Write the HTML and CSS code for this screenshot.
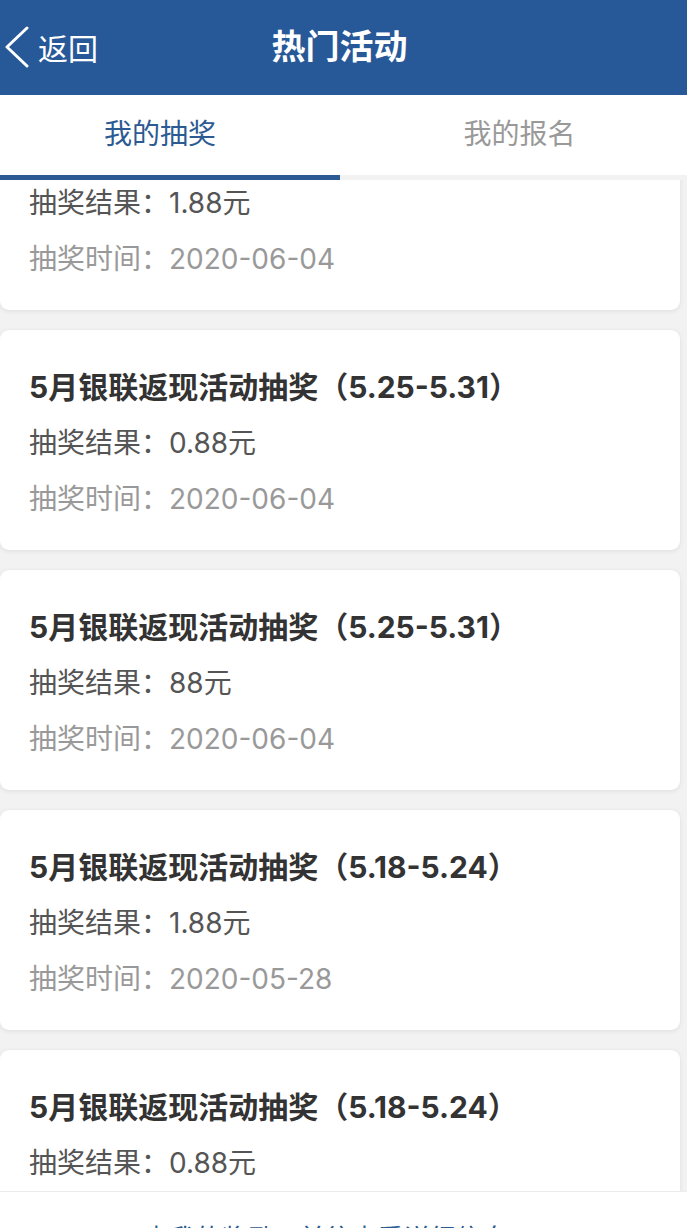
FILE: index.html
```html
<!DOCTYPE html>
<html lang="zh-CN">

<head>
    <meta charset="UTF-8">
    <meta name="viewport" content="width=device-width, initial-scale=1.0">
    <title>热门活动</title>
    <link rel="stylesheet" href="styles.css">
</head>

<body>
    <div class="page">
        <header class="topbar">
            <a class="back" href="#">
                <svg class="back-icon" width="26" height="42" viewBox="0 0 26 42">
                    <polyline points="23,2 3,21 23,40" fill="none" stroke="#fff" stroke-width="3" stroke-linecap="round" stroke-linejoin="round" />
                </svg>
                <span>返回</span>
            </a>
            <h1>热门活动</h1>
        </header>

        <nav class="tabs">
            <div class="tab active"><span>我的抽奖</span></div>
            <div class="tab"><span>我的报名</span></div>
        </nav>

        <div class="list">
            <div class="list-inner">
                <div class="card">
                    <div class="card-title">5月银联返现活动抽奖（5.25-5.31）</div>
                    <div class="card-result">抽奖结果：1.88元</div>
                    <div class="card-time">抽奖时间：2020-06-04</div>
                </div>
                <div class="card">
                    <div class="card-title">5月银联返现活动抽奖（5.25-5.31）</div>
                    <div class="card-result">抽奖结果：0.88元</div>
                    <div class="card-time">抽奖时间：2020-06-04</div>
                </div>
                <div class="card">
                    <div class="card-title">5月银联返现活动抽奖（5.25-5.31）</div>
                    <div class="card-result">抽奖结果：88元</div>
                    <div class="card-time">抽奖时间：2020-06-04</div>
                </div>
                <div class="card">
                    <div class="card-title">5月银联返现活动抽奖（5.18-5.24）</div>
                    <div class="card-result">抽奖结果：1.88元</div>
                    <div class="card-time">抽奖时间：2020-05-28</div>
                </div>
                <div class="card">
                    <div class="card-title">5月银联返现活动抽奖（5.18-5.24）</div>
                    <div class="card-result">抽奖结果：0.88元</div>
                    <div class="card-time">抽奖时间：2020-05-28</div>
                </div>
            </div>
        </div>

        <footer class="footer">
            <a href="#">点我的奖励，前往查看详细信息</a>
        </footer>
    </div>
</body>

</html>
```

FILE: styles.css
```css
body {
    margin: 0;
    padding: 0;
    font-family: "Inter", "Noto Sans CJK SC", sans-serif;
    background-color: #f2f2f2;
    overflow: hidden;
}

.page {
    height: 1228px;
    display: flex;
    flex-direction: column;
    overflow: hidden;
}

/* Top bar */
.topbar {
    height: 95px;
    flex-shrink: 0;
    background-color: #275898;
    display: grid;
    grid-template-columns: 1fr auto 1fr;
    align-items: center;
}

.back {
    display: flex;
    align-items: center;
    gap: 8px;
    padding-left: 4px;
    color: #fff;
    text-decoration: none;
    font-size: 30px;
    margin-top: -2px;
}

.back-icon {
    display: block;
}

.topbar h1 {
    margin: 0 0 6px -8px;
    color: #fff;
    font-size: 34px;
    font-weight: 700;
    text-align: center;
}

/* Tabs */
.tabs {
    height: 85px;
    flex-shrink: 0;
    display: grid;
    grid-template-columns: 340px 1fr;
    background-color: #fff;
}

.tab {
    display: flex;
    align-items: center;
    justify-content: center;
    font-size: 28px;
    color: #999;
    border-bottom: 5px solid #f2f2f2;
}

.tab span {
    margin-bottom: 6px;
}

.tab.active {
    color: #2c5a92;
    border-bottom-color: #2c5a92;
    padding-right: 20px;
}

.tab:not(.active) {
    padding-left: 12px;
}

/* List */
.list {
    height: 1011px;
    flex-shrink: 0;
    overflow: hidden;
}

.list-inner {
    margin-top: -90px;
    padding-right: 7px;
}

.card {
    height: 220px;
    box-sizing: border-box;
    margin-bottom: 20px;
    padding: 37px 29px 0;
    background-color: #fff;
    border-radius: 9px;
    box-shadow: 0 1px 5px rgba(0, 0, 0, 0.09);
}

.card-title,
.card-result,
.card-time {
    line-height: 40px;
    white-space: nowrap;
}

.card-title {
    font-size: 30px;
    font-weight: 700;
    color: #333;
}

.card-result {
    margin-top: 16px;
    font-size: 28px;
    color: #555;
}

.card-time {
    margin-top: 16px;
    font-size: 28px;
    color: #999;
}

/* Footer */
.footer {
    flex-shrink: 0;
    height: 100px;
    box-sizing: border-box;
    padding: 29px 36px 0 0;
    text-align: center;
    background-color: #fff;
    border-top: 1px solid #ececec;
}

.footer a {
    font-size: 26px;
    line-height: 36px;
    color: #2c5a92;
    text-decoration: none;
}
```
